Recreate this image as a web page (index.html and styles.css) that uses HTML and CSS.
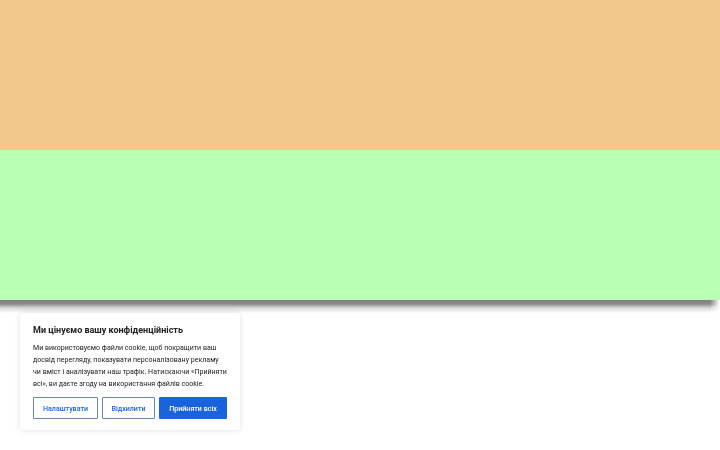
FILE: index.html
```html
<!DOCTYPE html>
<html lang="uk">
<head>
  <meta charset="utf-8">
  <title>Cookie consent</title>
  <link rel="stylesheet" href="styles.css">
</head>
<body>
  <div class="band band-top"></div>
  <div class="band band-bottom"></div>
  <div class="band-shadow"></div>

  <div class="cookie-banner">
    <h2 class="cookie-title">Ми цінуємо вашу конфіденційність</h2>
    <p class="cookie-text">Ми використовуємо файли cookie, щоб покращити ваш досвід перегляду, показувати персоналізовану рекламу чи&nbsp;вміст і аналізувати наш трафік. Натискаючи «Прийняти всі», ви даєте згоду на використання файлів cookie.</p>
    <div class="cookie-buttons">
      <button type="button" class="btn btn-outline">Налаштувати</button>
      <button type="button" class="btn btn-outline">Відхилити</button>
      <button type="button" class="btn btn-accept">Прийняти всіх</button>
    </div>
  </div>
</body>
</html>
```

FILE: styles.css
```css
body {
  margin: 0;
  font-family: Roboto, "Liberation Sans", Arial, sans-serif;
  background-color: #ffffff;
}

.band {
  height: 150px;
}

.band-top {
  background-color: #f3c98b;
}

.band-bottom {
  background-color: #b9ffb3;
}

/* soft dark edge under the green band */
.band-shadow {
  height: 13px;
  background: linear-gradient(rgba(0, 0, 0, 0.5) 0, rgba(0, 0, 0, 0.45) 4px, rgba(0, 0, 0, 0.15) 8px, rgba(0, 0, 0, 0) 13px);
  -webkit-mask-image: linear-gradient(to right, #000 calc(100% - 10px), transparent);
  mask-image: linear-gradient(to right, #000 calc(100% - 10px), transparent);
}

.cookie-banner {
  position: fixed;
  left: 20px;
  bottom: 20px;
  width: 200px;
  padding: 10px 7px 11px 13px;
  background-color: #ffffff;
  border-radius: 3px;
  box-shadow: 0 0 6px rgba(0, 0, 0, 0.12);
  color: #212121;
}

.cookie-title {
  margin: 0 0 5px;
  font-size: 9px;
  font-weight: 700;
  line-height: 14px;
}

.cookie-text {
  max-width: 198px;
  margin: 0 0 7px;
  font-size: 7.05px;
  line-height: 12px;
}

.cookie-buttons {
  display: flex;
  gap: 4px;
}

.btn {
  height: 22px;
  padding: 0;
  font-family: inherit;
  font-size: 7.1px;
  font-weight: 500;
  border-radius: 1px;
  cursor: pointer;
}

.btn-outline {
  background-color: #ffffff;
  color: #1863dc;
  border: 1.5px solid #6a87ad;
}

.btn-outline:first-child {
  width: 65px;
}

.btn-outline:nth-child(2) {
  width: 53px;
}

.btn-accept {
  width: 68px;
  background-color: #1863dc;
  color: #ffffff;
  border: 1.5px solid #1863dc;
}
```
